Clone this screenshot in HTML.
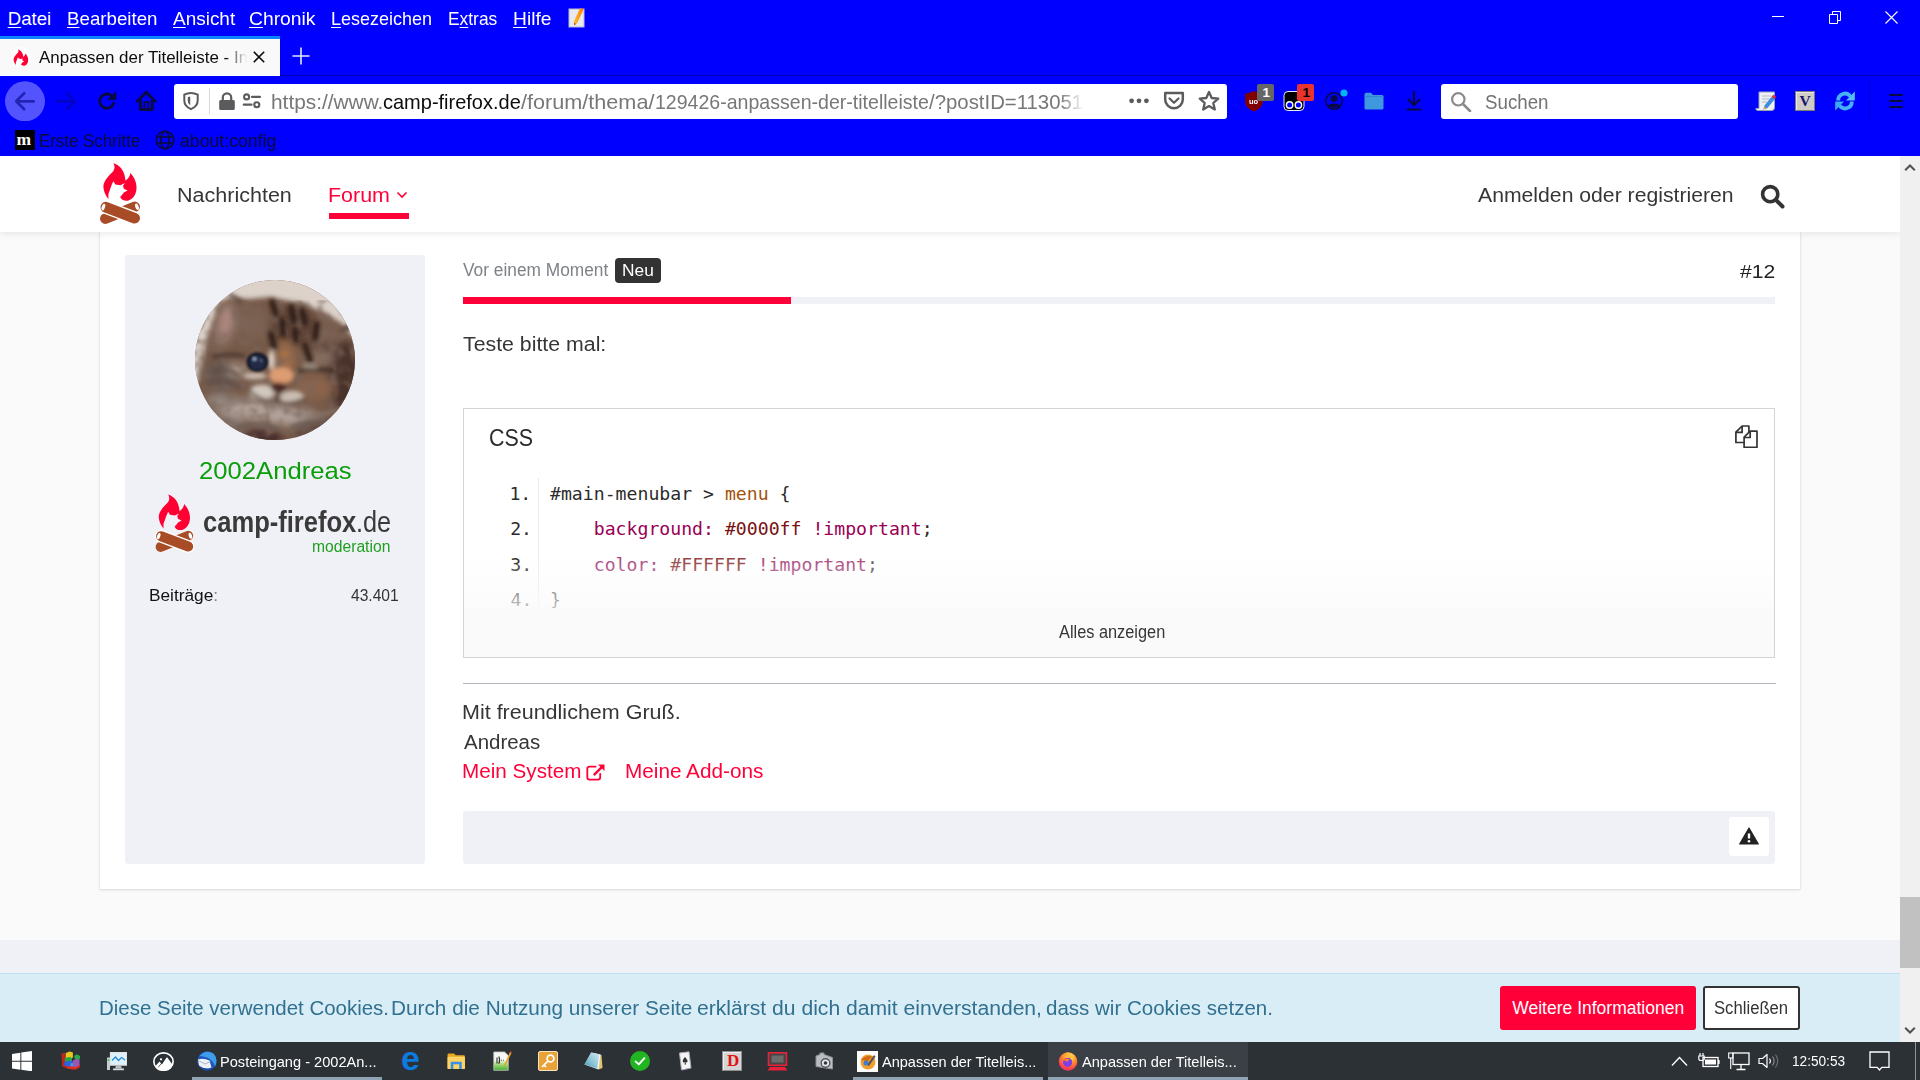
<!DOCTYPE html>
<html lang="de"><head><meta charset="utf-8"><title>Anpassen der Titelleiste - camp-firefox.de</title>
<style>
html,body{margin:0;padding:0}
body{width:1920px;height:1080px;overflow:hidden;position:relative;background:#fafafa;font-family:"Liberation Sans",sans-serif;}
.b{position:absolute;display:block}
.t{position:absolute;white-space:nowrap;line-height:1;transform-origin:0 50%;}
u{text-decoration:underline;text-underline-offset:2px;text-decoration-thickness:1px}
</style></head><body>
<div id="chrome" class="b" style="left:0;top:0;width:1920px;height:156px;background:#0000ff"></div>
<div id="browser-chrome"><nav id="menubar">
<span class="t" style="left:7.70px;top:10.00px;font-size:18.6px;color:#fff;"><u>D</u>atei</span>
<span class="t" style="left:66.69px;top:10.00px;font-size:18.6px;color:#fff;transform:scaleX(1.0058);"><u>B</u>earbeiten</span>
<span class="t" style="left:172.50px;top:10.00px;font-size:18.6px;color:#fff;transform:scaleX(1.0194);"><u>A</u>nsicht</span>
<span class="t" style="left:249.07px;top:10.00px;font-size:18.6px;color:#fff;transform:scaleX(1.0367);"><u>C</u>hronik</span>
<span class="t" style="left:330.85px;top:10.00px;font-size:18.6px;color:#fff;transform:scaleX(0.9678);"><u>L</u>esezeichen</span>
<span class="t" style="left:447.90px;top:10.00px;font-size:18.6px;color:#fff;transform:scaleX(0.9347);">E<u>x</u>tras</span>
<span class="t" style="left:512.95px;top:10.00px;font-size:18.6px;color:#fff;transform:scaleX(1.0326);"><u>H</u>ilfe</span>
<svg class="b" style="left:568px;top:8px;" width="18" height="20" viewBox="0 0 18 20"><rect x="1" y="1" width="15" height="18" fill="#e9e9f2" stroke="#b9b9c9" stroke-width="1"/>
<defs><linearGradient id="png" x1="0" y1="0" x2="1" y2="0"><stop offset="0" stop-color="#fbc02d"/><stop offset="1" stop-color="#ff7a00"/></linearGradient></defs><path d="M12 0.3L15.600 1.300L9.200 15L6.200 17.300L5.900 13.600Z" fill="url(#png)"/><path d="M6 14.800L6.200 17.300L8 16Z" fill="#8a4b2a"/></svg>
</nav><div id="window-controls">
<div class="b" style="left:1772px;top:16px;width:12px;height:1px;background:#fff;"></div>
<svg class="b" style="left:1829px;top:11px;" width="12" height="13" viewBox="0 0 12 13"><path d="M3.5 3.5V0.5H11.5V9.5H8.5M0.5 3.5H8.5V12.5H0.5Z" fill="none" stroke="#fff" stroke-width="1"/></svg>
<svg class="b" style="left:1885px;top:11px;" width="13" height="13" viewBox="0 0 13 13"><path d="M0.5 0.5L12.5 12.5M12.5 0.5L0.5 12.5" fill="none" stroke="#fff" stroke-width="1.1"/></svg>
</div><div id="tabstrip">
<div class="b" style="left:0px;top:36px;width:280px;height:40px;background:#f9f9fa;"></div>
<div class="b" style="left:0px;top:36px;width:280px;height:3px;background:#0a84ff;"></div>
<div class="b" style="left:280px;top:75px;width:1640px;height:1px;background:#0000ae;"></div>
<div class="b" style="left:280px;top:40px;width:1px;height:35px;background:#0000ea;"></div>
<svg class="b" style="left:11px;top:47px;" width="20" height="20" viewBox="0 0 20 20"><circle cx="10" cy="10" r="10" fill="#fff"/></svg>
<svg class="b" style="left:13px;top:48.5px;" width="16" height="17" viewBox="185 95 490 550"><path d="M330,100C420,130 480,200 495,290L505,350C545,320 570,280 575,240C640,310 670,400 660,480C650,560 600,620 540,635C480,640 440,620 430,580C450,560 470,540 480,520L535,490L480,465L470,420L500,385L430,415L360,405L332,360C300,420 280,500 262,540L262,610C220,560 190,500 190,430C195,340 280,270 330,215C360,170 350,130 330,100Z" fill="#ff0033"/></svg>
<span class="t" style="left:39.00px;top:49.00px;font-size:17.2px;color:#0c0c0d;transform:scaleX(0.9857);">Anpassen der Titelleiste - In</span>
<div class="b" style="left:225px;top:40px;width:26px;height:34px;background:linear-gradient(to right,rgba(249,249,250,0),#f9f9fa 85%);"></div>
<svg class="b" style="left:253px;top:51px;" width="12" height="12" viewBox="0 0 12 12"><path d="M0.8 0.8L11.2 11.2M11.2 0.8L0.8 11.2" fill="none" stroke="#0c0c0d" stroke-width="1.6"/></svg>
<svg class="b" style="left:292px;top:47px;" width="18" height="18" viewBox="0 0 18 18"><path d="M9 0.5V17.5M0.5 9H17.5" fill="none" stroke="#e6e6ff" stroke-width="1.6"/></svg>
</div><div id="navbar">
<svg class="b" style="left:5px;top:81px;" width="40" height="40" viewBox="0 0 40 40"><circle cx="20" cy="20.3" r="20" fill="#5454ff"/><path d="M28.8 20.3H12M19.2 12.3L11.2 20.3L19.2 28.3" fill="none" stroke="#2424b4" stroke-width="2.7" stroke-linecap="round" stroke-linejoin="round"/></svg>
<svg class="b" style="left:55px;top:91px;" width="22" height="20" viewBox="0 0 22 20"><path d="M2.2 10.3H19.5M12 2.3L20 10.3L12 18.3" fill="none" stroke="#0303c6" stroke-width="2.7" stroke-linecap="round" stroke-linejoin="round"/></svg>
<svg class="b" style="left:96px;top:90px;" width="22" height="22" viewBox="0 0 22 22"><path d="M17.6 13.2A7.1 7.1 0 1 1 15 5.4" fill="none" stroke="#0a0a3d" stroke-width="2.8" stroke-linecap="round"/><path d="M19.8 1.8V9.6H12Z" fill="#0a0a3d" stroke="#0a0a3d" stroke-width="0.8" stroke-linejoin="round"/></svg>
<svg class="b" style="left:135px;top:90px;" width="22" height="22" viewBox="0 0 22 22"><path d="M2.4 11.2L11.3 2.2L20.2 11.2" fill="none" stroke="#0a0a3d" stroke-width="2.8" stroke-linecap="round" stroke-linejoin="round"/><path d="M5.4 10V19.6H17.2V10" fill="none" stroke="#0a0a3d" stroke-width="2.8" stroke-linejoin="round"/><rect x="9.3" y="12" width="4" height="7" fill="none" stroke="#0a0a3d" stroke-width="1.8"/></svg>
<div class="b" style="left:174px;top:84px;width:1053px;height:35px;background:#fff;border-radius:3px"></div>
<svg class="b" style="left:182px;top:91px;" width="18" height="20" viewBox="0 0 18 20"><path d="M9 2C6.600 2 4.300 2.600 2.300 3.700V9.500C2.300 13.600 5 16.400 9 18.100C13 16.400 15.700 13.600 15.700 9.500V3.700C13.700 2.600 11.400 2 9 2Z" fill="none" stroke="#5b5b5e" stroke-width="2"/><path d="M8.200 5.600V14.200C6.600 13.200 5.800 11.700 5.800 9.500V6.200C6.600 5.900 7.400 5.700 8.200 5.600Z" fill="#5b5b5e"/></svg>
<div class="b" style="left:209px;top:88px;width:1px;height:26px;background:#d7d7db;"></div>
<svg class="b" style="left:218px;top:92px;" width="18" height="18" viewBox="0 0 18 18"><rect x="1.2" y="8" width="15.6" height="10" rx="1.5" fill="#5b5b5e"/><path d="M4.8 8.5V5.5A4.2 4.2 0 0 1 13.2 5.5V8.5" fill="none" stroke="#5b5b5e" stroke-width="2.2"/></svg>
<svg class="b" style="left:242px;top:93px;" width="20" height="16" viewBox="0 0 20 16"><circle cx="4.6" cy="3.9" r="2.500" fill="none" stroke="#5b5b5e" stroke-width="2.1"/><path d="M10 3.9H18" stroke="#5b5b5e" stroke-width="2.2" stroke-linecap="round"/><circle cx="14.8" cy="11.700" r="2.500" fill="none" stroke="#5b5b5e" stroke-width="2.1"/><path d="M1.800 11.700H9.500" stroke="#5b5b5e" stroke-width="2.2" stroke-linecap="round"/></svg>
<span class="t" style="left:271.06px;top:92.00px;font-size:20.3px;color:#77777a;transform:scaleX(1.0274);">https://www.</span>
<span class="t" style="left:382.61px;top:92.00px;font-size:20.3px;color:#0c0c0d;transform:scaleX(0.9856);">camp-firefox.de</span>
<span class="t" style="left:520.50px;top:92.00px;font-size:20.3px;color:#77777a;transform:scaleX(1.0664);">/forum/thema/</span>
<span class="t" style="left:655.25px;top:92.00px;font-size:20.3px;color:#77777a;transform:scaleX(0.9640);">129426-anpassen-der-titelleiste</span>
<span class="t" style="left:929.00px;top:92.00px;font-size:20.3px;color:#77777a;transform:scaleX(1.0040);">/?postID=1130512</span>
<div class="b" style="left:1060px;top:86px;width:50px;height:31px;background:linear-gradient(to right,rgba(255,255,255,0),#fff 48%);"></div>
<svg class="b" style="left:1128px;top:97px;" width="22" height="8" viewBox="0 0 22 8"><circle cx="3.6" cy="3.8" r="2.4" fill="#5b5b5e"/><circle cx="11" cy="3.8" r="2.4" fill="#5b5b5e"/><circle cx="18.4" cy="3.8" r="2.4" fill="#5b5b5e"/></svg>
<svg class="b" style="left:1163px;top:91px;" width="22" height="20" viewBox="0 0 22 20"><path d="M2.2 2H19.8V8.5A8.8 8.8 0 0 1 2.2 8.5Z" fill="none" stroke="#5b5b5e" stroke-width="2.5" stroke-linejoin="round"/><path d="M6.5 7.5L11 11.8L15.5 7.5" fill="none" stroke="#5b5b5e" stroke-width="2.2" stroke-linecap="round" stroke-linejoin="round"/></svg>
<svg class="b" style="left:1198px;top:90px;" width="22" height="22" viewBox="0 0 22 22"><path d="M11 2L13.7 8L20.2 8.6L15.3 13L16.8 19.5L11 16.1L5.2 19.5L6.7 13L1.8 8.6L8.3 8Z" fill="none" stroke="#5b5b5e" stroke-width="2.3" stroke-linejoin="round"/></svg>
<svg class="b" style="left:1244px;top:90px;" width="20" height="22" viewBox="0 0 20 22"><path d="M10 1C7 2.6 4 3.4 1 3.5V11C1 16 5 19.5 10 21.5C15 19.5 19 16 19 11V3.5C16 3.4 13 2.6 10 1Z" fill="#800000"/></svg>
<span class="t" style="left:1249.13px;top:97.60px;font-size:8px;color:#fff;transform:scaleX(0.9346);font-weight:700;">uo</span>
<div class="b" style="left:1257px;top:84px;width:17px;height:17px;background:#666;border-radius:2px"></div>
<span class="t" style="left:1262.50px;top:86.30px;font-size:13.5px;color:#fff;font-weight:700;">1</span>
<svg class="b" style="left:1283px;top:90px;" width="22" height="22" viewBox="0 0 22 22"><rect x="1" y="1.5" width="20" height="19" rx="4" fill="#000" stroke="#e8e8ff" stroke-width="1"/><circle cx="6.6" cy="15" r="3.2" fill="#0000ff" stroke="#fff" stroke-width="1.4"/><circle cx="15.4" cy="15" r="3.2" fill="#0000ff" stroke="#fff" stroke-width="1.4"/></svg>
<div class="b" style="left:1297px;top:84px;width:17px;height:17px;background:#e8332f;border-radius:2px"></div>
<span class="t" style="left:1302.50px;top:86.30px;font-size:13.5px;color:#000;font-weight:700;">1</span>
<svg class="b" style="left:1324px;top:91px;" width="20" height="20" viewBox="0 0 20 20"><circle cx="10" cy="10" r="8.3" fill="none" stroke="#0a0a3d" stroke-width="1.5"/><circle cx="10" cy="7.6" r="3.4" fill="#0a0a3d"/><path d="M4 14.5C5.5 11.8 14.5 11.8 16 14.5C14.5 17.5 5.5 17.5 4 14.5Z" fill="#0a0a3d"/></svg>
<svg class="b" style="left:1340px;top:89px;" width="8" height="8" viewBox="0 0 8 8"><circle cx="4" cy="4" r="3.6" fill="#00b3f4"/></svg>
<svg class="b" style="left:1364px;top:92px;" width="20" height="18" viewBox="0 0 20 18"><path d="M0.5 2.5Q0.5 0.8 2.2 0.8H7L9 3H18Q19.5 3 19.5 4.5V16Q19.5 17.5 18 17.5H2Q0.5 17.5 0.5 16Z" fill="#3f97de"/><path d="M0.5 4.5H19.5" stroke="#2f86cf" stroke-width="1"/></svg>
<svg class="b" style="left:1405px;top:90px;" width="18" height="22" viewBox="0 0 18 22"><path d="M9 1.800V15M3.400 9.500L9 15.200L14.600 9.500M2.600 19.500H15.400" fill="none" stroke="#0a0a3d" stroke-width="2.1" stroke-linecap="round" stroke-linejoin="round"/></svg>
<div class="b" style="left:1441px;top:84px;width:297px;height:35px;background:#fff;border-radius:3px"></div>
<svg class="b" style="left:1450px;top:91px;" width="22" height="21" viewBox="0 0 22 21"><circle cx="8.3" cy="8.3" r="6.2" fill="none" stroke="#8a8a8d" stroke-width="2.2"/><path d="M13 13L20 20" stroke="#8a8a8d" stroke-width="2.6" stroke-linecap="round"/></svg>
<span class="t" style="left:1485.17px;top:92.00px;font-size:20.3px;color:#737376;transform:scaleX(0.9233);">Suchen</span>
<svg class="b" style="left:1755px;top:91px;" width="21" height="21" viewBox="0 0 21 21"><path d="M4 1H19.5V16.5Q19.5 19.5 16.5 19.5H3Q0.8 19.5 0.8 17.5H4Z" fill="#eef0f6" stroke="#9aa0b4" stroke-width="1"/><path d="M7 5H16M7 8H16M7 11H12" stroke="#b4b9c9" stroke-width="1"/><path d="M17.300 5L9.500 14.500L8.500 18.500L12.500 17L20.300 7.500Z" fill="#3d8be0"/><path d="M16.600 5.800L18.300 3.600L21 5.800L19.500 8.300Z" fill="#e0342f"/><path d="M8.500 18.500L9.200 15.800L11.600 17.300Z" fill="#e3a33a"/></svg>
<div class="b" style="left:1795px;top:91px;width:20px;height:20px;background:#cfccc8;box-sizing:border-box;border:1px solid #7d7a76;box-shadow:inset 1px 1px 0 #e9e7e4"></div>
<span class="t" style="left:1799.40px;top:93.00px;font-size:15.5px;color:#14146e;font-weight:700;font-family:'Liberation Serif',serif;">V</span>
<svg class="b" style="left:1835px;top:91px;" width="20" height="20" viewBox="0 0 20 20"><g fill="none" stroke="#45b3f6" stroke-width="3.8"><path d="M3.2 9.4A6.7 6.7 0 0 1 15.4 5.5"/><path d="M16.8 10.600A6.7 6.7 0 0 1 4.600 14.500"/></g><path d="M19.8 0.600V9.400H11Z" fill="#57bdf8"/><path d="M0.200 19.400V10.600H9Z" fill="#3aa9f0"/></svg>
<div class="b" style="left:1869px;top:80px;width:1px;height:42px;background:#0000d2;"></div>
<div class="b" style="left:1889px;top:94px;width:14px;height:2px;background:#0a0a3d;border-radius:1px"></div>
<div class="b" style="left:1889px;top:100px;width:14px;height:2px;background:#0a0a3d;border-radius:1px"></div>
<div class="b" style="left:1889px;top:106px;width:14px;height:2px;background:#0a0a3d;border-radius:1px"></div>
</div><div id="bookmarks-toolbar">
<div class="b" style="left:15px;top:130px;width:20px;height:20px;background:#000;"></div>
<span class="t" style="left:16.60px;top:130.60px;font-size:17.5px;color:#fff;font-weight:700;font-family:'Liberation Serif',serif;">m</span>
<span class="t" style="left:39.16px;top:133.20px;font-size:17.6px;color:#0b0b36;transform:scaleX(0.9583);">Erste Schritte</span>
<svg class="b" style="left:155px;top:130px;" width="20" height="20" viewBox="0 0 20 20"><g fill="none" stroke="#0b0b36" stroke-width="1.6"><circle cx="10" cy="10" r="8.8"/><ellipse cx="10" cy="10" rx="4" ry="8.8"/><path d="M1.5 7H18.5M1.5 13H18.5"/></g></svg>
<span class="t" style="left:180.10px;top:133.20px;font-size:17.6px;color:#0b0b36;transform:scaleX(1.0044);">about:config</span>
</div></div><div id="page">
<div class="b" style="left:0px;top:156px;width:1900px;height:884px;background:#fafafa;"></div>
<div class="b" style="left:100px;top:232px;width:1700px;height:657px;background:#fff;box-shadow:0 0 0 1px rgba(0,0,0,.035),0 1px 3px rgba(0,0,0,.10)"></div>
<header id="pageHeader">
<div class="b" style="left:0px;top:156px;width:1900px;height:76px;background:#fff;box-shadow:0 1px 8px rgba(0,0,0,.10)"></div>
<svg class="b" style="left:90px;top:156px;" width="60" height="76" viewBox="0 0 853 1080"><path d="M330,100C420,130 480,200 495,290L505,350C545,320 570,280 575,240C640,310 670,400 660,480C650,560 600,620 540,635C480,640 440,620 430,580C450,560 470,540 480,520L535,490L480,465L470,420L500,385L430,415L360,405L332,360C300,420 280,500 262,540L262,610C220,560 190,500 190,430C195,340 280,270 330,215C360,170 350,130 330,100Z" fill="#ff0033"/><g stroke-linecap="round" fill="none"><path d="M218,890L635,722" stroke="#a84c27" stroke-width="150"/>
<path d="M225,728L635,883" stroke="#fff" stroke-width="192"/><path d="M225,728L635,883" stroke="#a84c27" stroke-width="152"/></g>
<ellipse cx="190" cy="726" rx="24" ry="48" transform="rotate(17 190 726)" fill="#fff"/>
<ellipse cx="668" cy="722" rx="24" ry="48" transform="rotate(-17 668 722)" fill="#fff"/></svg>
<span class="t" style="left:177.28px;top:185.00px;font-size:20px;color:#363636;transform:scaleX(1.0761);">Nachrichten</span>
<span class="t" style="left:327.68px;top:185.00px;font-size:20px;color:#ff0039;transform:scaleX(1.0721);">Forum</span>
<svg class="b" style="left:396px;top:191px;" width="12" height="9" viewBox="0 0 12 9"><path d="M1.5 1.5L6 6L10.5 1.5" fill="none" stroke="#ff0039" stroke-width="1.6"/></svg>
<div class="b" style="left:329px;top:213px;width:80px;height:6px;background:#ff0039;"></div>
<span class="t" style="left:1477.50px;top:185.00px;font-size:20px;color:#363636;transform:scaleX(1.0595);">Anmelden oder registrieren</span>
<svg class="b" style="left:1760px;top:184px;" width="25" height="25" viewBox="0 0 25 25"><circle cx="10.2" cy="10.2" r="7.6" fill="none" stroke="#333" stroke-width="3.6"/><path d="M16 16L22.5 22.5" stroke="#333" stroke-width="4" stroke-linecap="round"/></svg>
</header><main id="content"><article class="message"><aside class="messageSidebar">
<div class="b" style="left:125px;top:255px;width:300px;height:609px;background:#f0f1f7;border-radius:3px"></div>
<svg class="b" style="left:195px;top:280px;" width="160" height="160" viewBox="0 0 160 160"><defs><clipPath id="avc"><circle cx="80" cy="80" r="80"/></clipPath>
<filter id="bl" x="-30%" y="-30%" width="160%" height="160%"><feGaussianBlur stdDeviation="4.5"/></filter>
<filter id="bl4" x="-30%" y="-30%" width="160%" height="160%"><feGaussianBlur stdDeviation="2.6"/></filter>
<filter id="bl2" x="-30%" y="-30%" width="160%" height="160%"><feGaussianBlur stdDeviation="2.1"/></filter>
<filter id="bl3" x="-30%" y="-30%" width="160%" height="160%"><feGaussianBlur stdDeviation="0.9"/></filter>
<filter id="fur" x="0" y="0" width="100%" height="100%"><feTurbulence type="fractalNoise" baseFrequency="0.09 0.09" numOctaves="2" seed="4"/><feColorMatrix type="matrix" values="0 0 0 0 0.2  0 0 0 0 0.13  0 0 0 0 0.1  0 0 0 3.4 -1.5"/><feGaussianBlur stdDeviation="0.9"/></filter>
</defs>
<g clip-path="url(#avc)"><rect width="160" height="160" fill="#775a49"/>
<g filter="url(#bl4)">
<path d="M-10 -10H170V66L156 56L147 44L132 34L110 25L76 17L54 19L34 18L24 24L13 56L8 76L4 100L-10 110Z" fill="#dcd2ca"/>
</g>
<g filter="url(#bl)">
<ellipse cx="30" cy="44" rx="10" ry="22" fill="#9b7f76" transform="rotate(12 30 44)"/>
<ellipse cx="58" cy="44" rx="17" ry="15" fill="#7b6253"/>
<ellipse cx="98" cy="46" rx="24" ry="20" fill="#5e4437"/>
<ellipse cx="134" cy="60" rx="13" ry="15" fill="#7c6152"/>
<ellipse cx="150" cy="98" rx="17" ry="38" fill="#4a332b"/><ellipse cx="128" cy="70" rx="14" ry="8" fill="#5e463a"/>
<ellipse cx="26" cy="96" rx="17" ry="17" fill="#665750"/>
<ellipse cx="42" cy="90" rx="10" ry="6" fill="#b3a398"/>
<ellipse cx="120" cy="108" rx="20" ry="11" fill="#8e654c"/>
<ellipse cx="124" cy="78" rx="16" ry="7" fill="#8b7163"/>
<ellipse cx="70" cy="132" rx="58" ry="11" fill="#b0a199" transform="rotate(8 70 132)"/>
<ellipse cx="26" cy="122" rx="16" ry="8" fill="#94867e"/>
<ellipse cx="90" cy="78" rx="9" ry="17" fill="#a56f49"/>
<ellipse cx="68" cy="158" rx="20" ry="9" fill="#472a2c"/>
<ellipse cx="126" cy="150" rx="28" ry="12" fill="#5f4840"/>
<ellipse cx="30" cy="146" rx="22" ry="10" fill="#7f6d65"/>
</g>
<path d="M0 20H160V160H0Z" filter="url(#fur)" opacity="0.7"/>
<g filter="url(#bl2)">
<path d="M77 22L81 34M87 41L88 54M96 27L99 41M107 30L110 43M76 54L79 67M110 65L115 80M122 44L120 58M100 50L101 60" stroke="#2e1e18" stroke-width="6" stroke-linecap="round" fill="none"/>
<path d="M34 14L47 22" stroke="#4a382f" stroke-width="3" fill="none"/>
<path d="M146 50L156 46" stroke="#4a382f" stroke-width="3" fill="none"/>
<ellipse cx="31" cy="42" rx="4.500" ry="12" fill="#ab857d" transform="rotate(10 31 42)"/>
<ellipse cx="76.500" cy="80" rx="3.500" ry="10" fill="#d8cdc3"/>
<ellipse cx="60" cy="96" rx="12" ry="3.500" fill="#cbbdb1"/>
<path d="M17 77Q34 73 50 76" stroke="#48352e" stroke-width="3.500" fill="none"/>
<path d="M18 92Q30 86 44 96M14 104Q30 98 46 108" stroke="#5d4b43" stroke-width="3" fill="none"/>
<ellipse cx="86.500" cy="95.500" rx="12.500" ry="8.500" fill="#dd9c72"/>
<ellipse cx="67" cy="112" rx="13" ry="7.500" fill="#d2c7bd"/><ellipse cx="97" cy="117" rx="12" ry="6.500" fill="#cabdb2"/>
<path d="M54 109Q62 121 82.500 121.500Q96 126 110 118" stroke="#5b4840" stroke-width="2.600" fill="none"/>
<ellipse cx="83.700" cy="107.500" rx="8" ry="5" fill="#4a2722"/>
<path d="M83 110V121" stroke="#4f342c" stroke-width="3"/>
<path d="M104 92Q108 87 116 88.500L140 91" stroke="#33231c" stroke-width="3" fill="none"/>
<path d="M108 86L122 86.500" stroke="#c9bcb0" stroke-width="2" fill="none"/>
<path d="M20 128Q60 112 100 134Q120 140 146 128" stroke="#8a786f" stroke-width="3" fill="none"/>
<path d="M40 150Q60 138 84 150M96 148Q116 138 136 146" stroke="#695750" stroke-width="3" fill="none"/>
</g>
<g filter="url(#bl3)"><ellipse cx="62.400" cy="82" rx="10.800" ry="9.800" fill="#151a29"/><ellipse cx="62.400" cy="82.500" rx="7.500" ry="7" fill="#222b47"/><ellipse cx="59.500" cy="79" rx="2.300" ry="2" fill="#8c9bbb"/><ellipse cx="66" cy="80.500" rx="1.200" ry="1.200" fill="#5d6c90"/></g>
</g></svg>
<span class="t" style="left:198.51px;top:458.70px;font-size:23.75px;color:#0a9e0a;transform:scaleX(1.0802);">2002Andreas</span>
<svg class="b" style="left:146px;top:488.3px;" width="56.8" height="71.5" viewBox="0 0 853 1080"><path d="M330,100C420,130 480,200 495,290L505,350C545,320 570,280 575,240C640,310 670,400 660,480C650,560 600,620 540,635C480,640 440,620 430,580C450,560 470,540 480,520L535,490L480,465L470,420L500,385L430,415L360,405L332,360C300,420 280,500 262,540L262,610C220,560 190,500 190,430C195,340 280,270 330,215C360,170 350,130 330,100Z" fill="#ff0033"/><g stroke-linecap="round" fill="none"><path d="M218,890L635,722" stroke="#a84c27" stroke-width="150"/>
<path d="M225,728L635,883" stroke="#fff" stroke-width="192"/><path d="M225,728L635,883" stroke="#a84c27" stroke-width="152"/></g>
<ellipse cx="190" cy="726" rx="24" ry="48" transform="rotate(17 190 726)" fill="#fff"/>
<ellipse cx="668" cy="722" rx="24" ry="48" transform="rotate(-17 668 722)" fill="#fff"/></svg>
<span class="t" style="left:203.20px;top:508.00px;font-size:29px;color:#3a3a3a;transform:scaleX(0.8810);font-weight:700;">camp-firefox</span>
<span class="t" style="left:355.52px;top:508.00px;font-size:29px;color:#3a3a3a;transform:scaleX(0.8729);">.de</span>
<span class="t" style="left:312.32px;top:539.00px;font-size:16px;color:#1fa01f;transform:scaleX(0.9789);">moderation</span>
<span class="t" style="left:149.12px;top:586.80px;font-size:16.25px;color:#111;transform:scaleX(1.0621);">Beiträge<span style="color:#7d8287">:</span></span>
<span class="t" style="left:351.01px;top:586.80px;font-size:16.25px;color:#333;transform:scaleX(0.9596);">43.401</span>
</aside><div class="messageContent"><div class="messageHeader">
<span class="t" style="left:462.50px;top:262.00px;font-size:17.5px;color:#7d8287;transform:scaleX(0.9890);">Vor einem Moment</span>
<div class="b" style="left:615px;top:258px;width:46px;height:25px;background:#333;border-radius:4px"></div>
<span class="t" style="left:621.54px;top:263.00px;font-size:16.6px;color:#fff;transform:scaleX(1.0455);">Neu</span>
<span class="t" style="left:1740.40px;top:262.50px;font-size:18.75px;color:#222;transform:scaleX(1.1261);">#12</span>
<div class="b" style="left:463px;top:297px;width:1312px;height:7px;background:#f0f1f7;"></div>
<div class="b" style="left:463px;top:297px;width:328px;height:7px;background:#ff0039;"></div>
</div><div class="messageBody">
<span class="t" style="left:462.57px;top:334.00px;font-size:20px;color:#363636;transform:scaleX(1.0653);">Teste bitte mal:</span>
<div class="codeBox">
<div class="b" style="left:463px;top:408px;width:1312px;height:250px;background:#fff;box-sizing:border-box;border:1px solid #d3d3d8"></div>
<span class="t" style="left:488.59px;top:427.25px;font-size:23.4px;color:#2b2b2b;transform:scaleX(0.9152);">CSS</span>
<svg class="b" style="left:1735px;top:425px;" width="23" height="23" viewBox="0 0 23 23"><g fill="#fff" stroke="#333" stroke-width="1.7" stroke-linejoin="round"><path d="M0.9 7.2L7.1 1H13.9V17.500H0.900Z"/><path d="M7.100 1V7.400H0.900" fill="none"/><path d="M9.100 12.100L15.200 6.200H22V22.300H9.100Z"/><path d="M15.200 6.200V12.500H9.100" fill="none"/></g></svg>
<div class="b" style="left:538px;top:478px;width:1px;height:130px;background:#ecebf0;"></div>
<span class="t" style="left:509.40px;top:484.60px;font-size:18.16px;color:#2b2b2b;font-family:'DejaVu Sans Mono','Liberation Mono',monospace;">1.</span>
<span class="t" style="left:550.00px;top:484.60px;font-size:18.16px;color:#2b2b2b;font-family:'DejaVu Sans Mono','Liberation Mono',monospace;white-space:pre;">#main-menubar &gt; <span style="color:#a5510a">menu</span> {</span>
<span class="t" style="left:510.20px;top:520.20px;font-size:18.16px;color:#2b2b2b;font-family:'DejaVu Sans Mono','Liberation Mono',monospace;">2.</span>
<span class="t" style="left:550.00px;top:520.20px;font-size:18.16px;color:#2b2b2b;font-family:'DejaVu Sans Mono','Liberation Mono',monospace;white-space:pre;">    <span style="color:#905">background</span><span style="color:#905">:</span> <span style="color:#7a1010">#0000ff</span> <span style="color:#905">!important</span>;</span>
<span class="t" style="left:510.30px;top:555.80px;font-size:18.16px;color:#2b2b2b;font-family:'DejaVu Sans Mono','Liberation Mono',monospace;">3.</span>
<span class="t" style="left:550.00px;top:555.80px;font-size:18.16px;color:#555;font-family:'DejaVu Sans Mono','Liberation Mono',monospace;white-space:pre;">    <span style="color:#a8447b">color</span><span style="color:#a8447b">:</span> <span style="color:#934040">#FFFFFF</span> <span style="color:#a8447b">!important</span>;</span>
<span class="t" style="left:510.60px;top:591.40px;font-size:18.16px;color:#2b2b2b;font-family:'DejaVu Sans Mono','Liberation Mono',monospace;">4.</span>
<span class="t" style="left:550.00px;top:591.40px;font-size:18.16px;color:#2b2b2b;font-family:'DejaVu Sans Mono','Liberation Mono',monospace;white-space:pre;">}</span>
<div class="b" style="left:464px;top:556px;width:1310px;height:52px;background:linear-gradient(to bottom,rgba(250,250,250,0),rgba(250,250,250,.74));"></div>
<div class="b" style="left:464px;top:608px;width:1310px;height:49px;background:#fafafa;"></div>
<span class="t" style="left:1059.40px;top:624.00px;font-size:17.5px;color:#363636;transform:scaleX(0.9335);">Alles anzeigen</span>
</div><div class="messageSignature">
<div class="b" style="left:463px;top:683px;width:1313px;height:1px;background:#b4b6bd;"></div>
<span class="t" style="left:461.78px;top:702.20px;font-size:20px;color:#363636;transform:scaleX(1.0748);">Mit freundlichem Gruß.</span>
<span class="t" style="left:463.50px;top:731.75px;font-size:20px;color:#363636;transform:scaleX(1.0230);">Andreas</span>
<span class="t" style="left:461.85px;top:761.00px;font-size:20px;color:#ff0039;transform:scaleX(1.0334);">Mein System</span>
<svg class="b" style="left:586px;top:763.8px;" width="19" height="17" viewBox="0 0 19 17"><path d="M14.200 9.800V13.300Q14.200 15.600 11.900 15.600H3.600Q1.300 15.600 1.300 13.300V5Q1.300 2.700 3.600 2.700H9.600" fill="none" stroke="#ff0039" stroke-width="1.8" stroke-linecap="round"/><path d="M7.800 11.200L16.300 2.700" stroke="#ff0039" stroke-width="2.4"/><path d="M12 0.400H18.500V6.900Z" fill="#ff0039"/></svg>
<span class="t" style="left:625.34px;top:761.00px;font-size:20px;color:#ff0039;transform:scaleX(1.0372);">Meine Add-ons</span>
</div></div><div class="messageFooter">
<div class="b" style="left:463px;top:811px;width:1312px;height:53px;background:#f0f1f7;border-radius:3px"></div>
<div class="b" style="left:1729px;top:817px;width:40px;height:39px;background:#fff;border-radius:3px"></div>
<svg class="b" style="left:1739px;top:827px;" width="20" height="18" viewBox="0 0 20 18"><path d="M10 1L19.3 17H0.7Z" fill="#222" stroke="#222" stroke-width="1.2" stroke-linejoin="round"/><path d="M10 6.5V11.5" stroke="#fff" stroke-width="2.4"/><circle cx="10" cy="14.2" r="1.3" fill="#fff"/></svg>
</div></div></article></main><footer id="pageFooter"><div class="cookiePolicyNotice">
<div class="b" style="left:0px;top:940px;width:1900px;height:34px;background:#f0f1f7;"></div>
<div class="b" style="left:0px;top:973px;width:1900px;height:69px;background:#d9edf7;box-shadow:inset 0 1px 0 #bcdff1"></div>
<span class="t" style="left:98.66px;top:997.80px;font-size:20px;color:#31708f;transform:scaleX(1.0231);">Diese Seite verwendet Cookies.</span>
<span class="t" style="left:391.34px;top:997.80px;font-size:20px;color:#31708f;transform:scaleX(1.0385);">Durch die Nutzung unserer Seite</span>
<span class="t" style="left:697.36px;top:997.80px;font-size:20px;color:#31708f;transform:scaleX(1.0555);">erklärst du dich damit einverstanden,</span>
<span class="t" style="left:1046.18px;top:997.80px;font-size:20px;color:#31708f;transform:scaleX(1.0259);">dass wir Cookies setzen.</span>
<div class="b" style="left:1500px;top:986px;width:196px;height:44px;background:#ff0039;border-radius:3px"></div>
<span class="t" style="left:1512.30px;top:1000.40px;font-size:17.5px;color:#fff;">Weitere Informationen</span>
<div class="b" style="left:1703px;top:986px;width:97px;height:44px;background:#fff;box-sizing:border-box;border:2px solid #333;border-radius:3px"></div>
<span class="t" style="left:1713.73px;top:1000.40px;font-size:17.5px;color:#333;transform:scaleX(0.9527);">Schließen</span>
</div></footer></div><div id="scrollbar">
<div class="b" style="left:1900px;top:156px;width:20px;height:886px;background:#f0f0f0;"></div>
<svg class="b" style="left:1904px;top:163px;" width="12" height="9" viewBox="0 0 12 9"><path d="M1.2 7.3L6 2.5L10.8 7.3" fill="none" stroke="#505050" stroke-width="2"/></svg>
<svg class="b" style="left:1904px;top:1026px;" width="12" height="9" viewBox="0 0 12 9"><path d="M1.2 1.7L6 6.5L10.8 1.7" fill="none" stroke="#505050" stroke-width="2"/></svg>
<div class="b" style="left:1900px;top:897px;width:20px;height:71px;background:#c1c1c1;"></div>
</div><div id="taskbar">
<div class="b" style="left:0px;top:1042px;width:1920px;height:38px;background:#2c3136;"></div>
<svg class="b" style="left:12px;top:1050.6px;" width="20.4" height="20.4" viewBox="0 0 21 21"><path d="M0 3L8.6 1.8V10H0ZM9.6 1.6L21 0V10H9.6ZM0 11H8.6V19.2L0 18ZM9.6 11H21V21L9.6 19.4Z" fill="#fff"/></svg>
<svg class="b" style="left:61.25px;top:1050.6px;" width="20" height="19.4" viewBox="490 85 160 155"><path d="M495 108L522 98L532 190L600 200L640 188L640 215L605 234L545 226L500 205Z" fill="#df2f1e"/><path d="M495 108L500 205L545 226L532 190L522 98Z" fill="#c3241a"/><path d="M528 100L560 88L585 96L585 138L552 146L528 138Z" fill="#e8c81e"/><path d="M520 140L560 132L578 140L578 168L540 174L520 166Z" fill="#28a347"/><path d="M516 168L572 164L592 172L592 204L540 208L516 198Z" fill="#2a62e0"/><path d="M566 182L594 180L594 206L566 206Z" fill="#38a6e8"/><path d="M585 160L612 146L638 150L638 196L604 214L585 205Z" fill="#9a57b8"/><path d="M596 122L618 110L642 124L642 146L620 154L596 142Z" fill="#2aa84a"/></svg>
<svg class="b" style="left:107px;top:1052px;" width="20" height="19" viewBox="0 0 20 19"><rect x="3.500" y="0.600" width="16" height="12.500" fill="#dcf1fb" stroke="#e4e4e4" stroke-width="1.2"/><path d="M5 8.500L8.500 5L11.500 8.500L14.500 5.500L18 8" fill="none" stroke="#2b8ad8" stroke-width="1.3"/><path d="M9 13.700H14L15 16.500H8Z" fill="#b9bec4"/><rect x="6" y="16.500" width="11" height="1.700" fill="#d9dcdf"/><rect x="0" y="5.500" width="3" height="12.500" fill="#c7ccd2"/><rect x="0.700" y="7" width="1.600" height="2" fill="#3bd23b"/></svg>
<svg class="b" style="left:152.5px;top:1051.5px;" width="21" height="19.5" viewBox="1220 92 168 156"><ellipse cx="1304" cy="169" rx="77" ry="70" fill="none" stroke="#fff" stroke-width="13"/><path d="M1238 205L1272 168L1292 192L1330 130L1378 196Q1350 238 1304 238Q1262 238 1238 205Z" fill="#fff"/><circle cx="1284" cy="150" r="9" fill="#fff"/><path d="M1262 214L1330 132" stroke="#2c3136" stroke-width="6"/></svg>
<svg class="b" style="left:197px;top:1051px;" width="20" height="20" viewBox="0 0 20 20"><circle cx="10" cy="10" r="9.700" fill="#1d56b8"/><path d="M2.500 5Q9 -2 16.500 2.500Q21.500 8 18 15.500Q16 9 10 6.500Q6 5 2.500 5Z" fill="#3f9ceb"/><path d="M1 8.500Q6 6.500 12.500 9.500L14.500 16.500Q7 19 2 14.500Z" fill="#eef2f8"/><path d="M1.500 9.500L8 13L13.500 10.500" fill="none" stroke="#aab6c8" stroke-width="1"/><path d="M3 16Q9 21 16.500 17Q12 18.500 8 17.500Z" fill="#123e8f"/></svg>
<span class="t" style="left:219.83px;top:1053.90px;font-size:15px;color:#fff;transform:scaleX(0.9723);">Posteingang - 2002An...</span>
<div class="b" style="left:192px;top:1077px;width:190px;height:3px;background:#8fa3b5;"></div>
<span class="t" style="left:400.94px;top:1040.80px;font-size:34px;color:#0c7ade;font-weight:700;">e</span>
<svg class="b" style="left:447px;top:1052.5px;" width="18.5" height="16.5" viewBox="0 0 20 18"><path d="M0.5 2Q0.5 0.5 2 0.5H7.5L9.5 2.5H18Q19.5 2.5 19.5 4V16Q19.5 17.5 18 17.5H2Q0.5 17.5 0.5 16Z" fill="#e9aa22"/><rect x="0.5" y="4.2" width="19" height="13.300" rx="1" fill="#fcd463"/><path d="M4 17.500V9.500H16V17.500H13.200V12.300H6.800V17.500Z" fill="#3a8ee6"/></svg>
<svg class="b" style="left:492.5px;top:1051px;" width="19" height="20" viewBox="0 0 19 20"><defs><linearGradient id="npg" x1="0" y1="0" x2="0" y2="1"><stop offset="0.45" stop-color="#f6f7f5"/><stop offset="0.62" stop-color="#b9e08c"/><stop offset="1" stop-color="#3fb02e"/></linearGradient></defs><path d="M0.800 1H11.500L15.200 4.500V19.300H0.800Z" fill="url(#npg)" stroke="#c7cbc5" stroke-width="0.8"/><path d="M4 6.500V12.500M5.800 5.500Q7.500 9 5.800 12.800M8.200 9.200H9M10.300 9.200H11" stroke="#2a2f2a" stroke-width="1.1" fill="none"/><path d="M17 1L11.300 13.300L10.700 15.800L12.700 14.200L18.500 2Z" fill="#e9a233"/><path d="M17 1L17.700 0L18.900 0.700L18.500 2Z" fill="#d8342c"/></svg>
<div class="b" style="left:538px;top:1051px;width:20px;height:20px;background:#e8a338;box-sizing:border-box;border:1.5px solid #f7e3bf;border-radius:2px"></div>
<svg class="b" style="left:540px;top:1053px;" width="16" height="16" viewBox="0 0 16 16"><circle cx="10.5" cy="5.5" r="3.4" fill="none" stroke="#fff" stroke-width="1.7"/><path d="M8 8L2 14M4 12L6 14" stroke="#fff" stroke-width="1.7" fill="none"/></svg>
<svg class="b" style="left:584px;top:1051px;" width="20" height="20" viewBox="0 0 20 20"><defs><linearGradient id="ntg" x1="1" y1="0" x2="0" y2="1"><stop offset="0" stop-color="#cfe9f2"/><stop offset="0.55" stop-color="#8cc4d6"/><stop offset="1" stop-color="#3f8fa8"/></linearGradient></defs><path d="M8 2L17.500 4L18.500 17L14.500 18.500Z" fill="#e3c36e"/><path d="M7.500 1.500L16.500 3.500L14.500 18.500L0.500 13.500Z" fill="#f3f6f8"/><path d="M7 1.500L15.300 3.300L13.200 17.800L0.500 13.300Z" fill="url(#ntg)"/></svg>
<svg class="b" style="left:630px;top:1051px;" width="20" height="20" viewBox="0 0 20 20"><circle cx="10" cy="10" r="10" fill="#22b522"/><path d="M5.600 10.400L8.800 13.400L14.400 7.200" fill="none" stroke="#fff" stroke-width="1.9" stroke-linecap="round" stroke-linejoin="round"/></svg>
<svg class="b" style="left:677px;top:1051px;" width="15" height="20" viewBox="0 0 15 20"><path d="M2.5 2L12 0.8L14 17L4.5 19Z" fill="#f4f4f4" stroke="#aab"/><path d="M8 6Q5 9 6 11Q7 12 8 11L7.5 13.5H9L8.6 11Q10 12 10.5 10.5Q11 9 8 6Z" fill="#333"/></svg>
<div class="b" style="left:722px;top:1051px;width:20px;height:20px;background:#d4d4d4;box-sizing:border-box;border:1.5px solid #8f8f8f;box-shadow:inset 1px 1px 0 #efefef"></div>
<span class="t" style="left:727.00px;top:1052.20px;font-size:17px;color:#e01313;font-weight:700;font-family:'Liberation Serif',serif;">D</span>
<svg class="b" style="left:767px;top:1052px;" width="21" height="19" viewBox="0 0 21 19"><rect x="1.5" y="0.8" width="18" height="12.5" fill="#444" stroke="#e8213a" stroke-width="1.6"/><rect x="4.5" y="3.5" width="12" height="7" fill="#6b6b6b"/><path d="M3 15H18L20.5 18.5H0.5Z" fill="#e8213a"/></svg>
<svg class="b" style="left:814px;top:1052px;" width="20" height="18" viewBox="0 0 20 18"><path d="M2 4L6 2.5V1H10V2.5L18.5 5.5V17L2 14.5Z" fill="#b9bcc0" stroke="#8d9196"/><circle cx="11.5" cy="11" r="4.3" fill="#e5e7ea" stroke="#55595e" stroke-width="1.4"/><circle cx="11.5" cy="11" r="1.8" fill="#33363a"/></svg>
<div class="b" style="left:857px;top:1051px;width:21px;height:21px;background:#fdfdfd;"></div>
<svg class="b" style="left:858px;top:1052px;" width="19" height="19" viewBox="0 0 19 19"><circle cx="10" cy="10" r="7.5" fill="#f0a030"/><path d="M3 8Q8 2 15 5Q11 6 10 10Q6 8 3 8Z" fill="#d46a12"/><path d="M9 13L16 3L17.5 4.5L11 14Z" fill="#555"/><circle cx="8" cy="11" r="2.5" fill="#3a7fd0"/></svg>
<span class="t" style="left:882.00px;top:1053.90px;font-size:15px;color:#fff;transform:scaleX(0.9690);">Anpassen der Titelleis...</span>
<div class="b" style="left:853px;top:1077px;width:190px;height:3px;background:#8fa3b5;"></div>
<div class="b" style="left:1048px;top:1042px;width:200px;height:38px;background:#3a4045;"></div>
<svg class="b" style="left:1058px;top:1051px;" width="20" height="20" viewBox="0 0 20 20"><defs><radialGradient id="fxg" cx="0.6" cy="0.25" r="0.9"><stop offset="0" stop-color="#fff36b"/><stop offset="0.35" stop-color="#ff9a2a"/><stop offset="0.75" stop-color="#ff3a4f"/><stop offset="1" stop-color="#c935c9"/></radialGradient></defs><circle cx="10" cy="10.5" r="9.3" fill="url(#fxg)"/><path d="M9 1Q12 2 13 5Q15 5 16 7Q13 6.5 11 8Q8 6 9 1Z" fill="#ffbd3a"/><circle cx="9.6" cy="11.3" r="4.6" fill="#7b3fe4"/><path d="M5 9Q8 6.5 12 8.5Q10 9 9.5 11Q7 9.5 5 9Z" fill="#ff7a2a"/></svg>
<span class="t" style="left:1081.60px;top:1053.90px;font-size:15px;color:#fff;transform:scaleX(0.9715);">Anpassen der Titelleis...</span>
<div class="b" style="left:1048px;top:1077px;width:200px;height:3px;background:#8fa3b5;"></div>
<svg class="b" style="left:1670.5px;top:1055.6px;" width="17" height="10.5" viewBox="0 0 18 11"><path d="M1 10L9 1.500L17 10" fill="none" stroke="#fff" stroke-width="1.4"/></svg>
<svg class="b" style="left:1698px;top:1052px;" width="22" height="18" viewBox="0 0 22 18"><rect x="5" y="5.5" width="15" height="9" fill="none" stroke="#fff" stroke-width="1.3"/><rect x="7" y="7.5" width="11" height="5" fill="#fff"/><rect x="20" y="8" width="1.6" height="4" fill="#fff"/><path d="M2 1V4M5 1V4M0.8 4H6.2V7Q6.2 8.5 3.5 8.5Q0.8 8.5 0.8 7Z" fill="none" stroke="#fff" stroke-width="1.2"/></svg>
<svg class="b" style="left:1728px;top:1052px;" width="22" height="19" viewBox="0 0 22 19"><rect x="5" y="1" width="16" height="11.5" fill="none" stroke="#fff" stroke-width="1.3"/><path d="M13 12.5V17M8.5 17.5H17.5" stroke="#fff" stroke-width="1.3"/><rect x="0.7" y="1" width="4" height="5" fill="#2c3136" stroke="#fff" stroke-width="1.1"/><path d="M2.7 6V17" stroke="#fff" stroke-width="1.1"/></svg>
<svg class="b" style="left:1758px;top:1052px;" width="22" height="18" viewBox="0 0 22 18"><path d="M1 6.5H4.5L9 2.5V15.5L4.5 11.5H1Z" fill="none" stroke="#fff" stroke-width="1.2" stroke-linejoin="round"/><path d="M11.5 6.5Q13.3 9 11.5 11.5" fill="none" stroke="#fff" stroke-width="1.1"/><path d="M14.5 4.5Q17.8 9 14.5 13.5" fill="none" stroke="#8d949b" stroke-width="1.1"/><path d="M17.5 2.5Q22 9 17.5 15.5" fill="none" stroke="#6d747b" stroke-width="1.1"/></svg>
<span class="t" style="left:1792.40px;top:1053.40px;font-size:15px;color:#fff;transform:scaleX(0.9091);">12:50:53</span>
<svg class="b" style="left:1868.6px;top:1051px;" width="21" height="20" viewBox="0 0 21 20"><path d="M1 1H20V16.300H12.800L10.500 19L8.200 16.300H1Z" fill="none" stroke="#fff" stroke-width="1.3" stroke-linejoin="miter"/></svg>
<div class="b" style="left:1915px;top:1042px;width:1px;height:38px;background:#8f959b;"></div>
</div>
</body></html>
